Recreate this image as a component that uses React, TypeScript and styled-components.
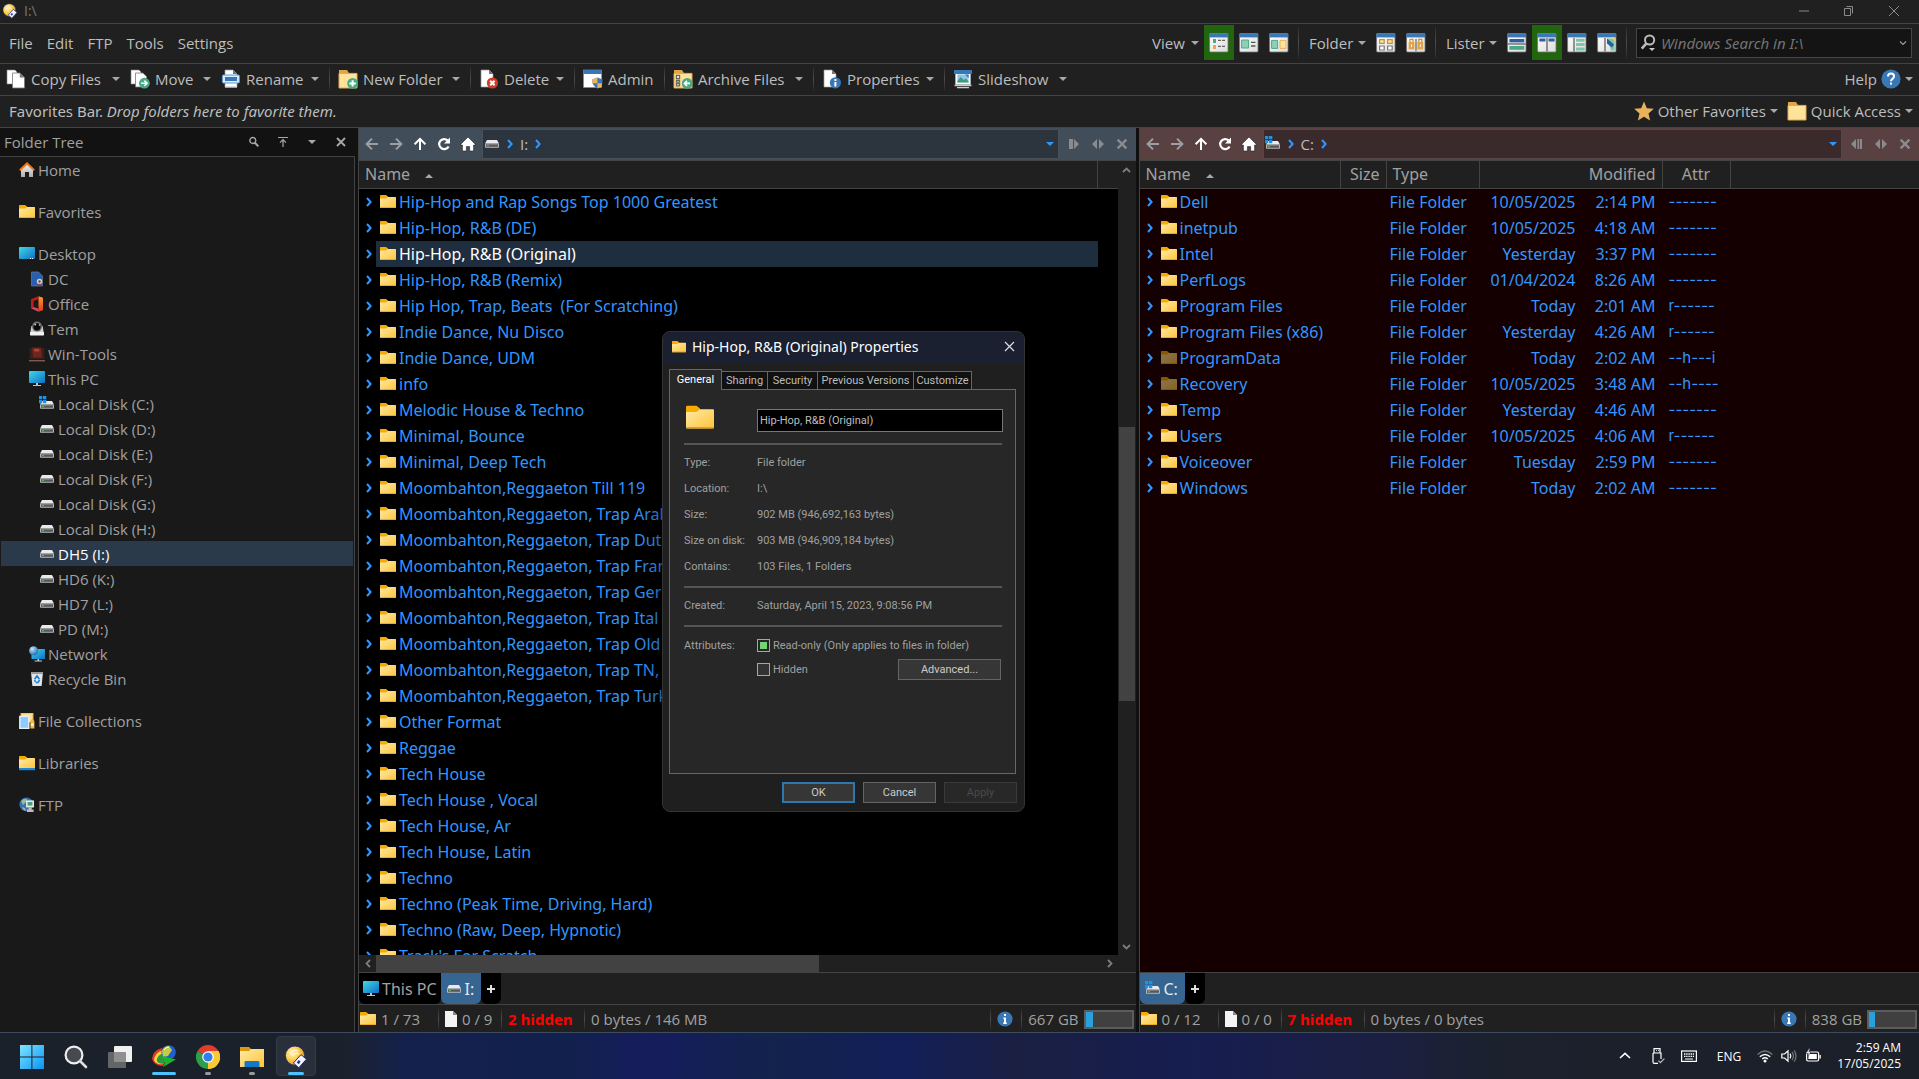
import React from "react";
import styled, { createGlobalStyle, css } from "styled-components";

const UI = `"Open Sans", "Noto Sans", sans-serif`;
const LIST_UI = `"Noto Sans", "Open Sans", sans-serif`;
const DIALOG_UI = `Roboto, "Liberation Sans", sans-serif`;
const c = {
  bar: "#202020",
  line: "#434343",
  text: "#bdbdbd",
  dim: "#a0a0a0",
  link: "#3296ff",
};

const Global = createGlobalStyle`
  * { box-sizing: border-box; }
  html, body, #root { height: 100%; }
  body { margin: 0; overflow: hidden; background: #000; }
  body, button, input { font-family: ${UI}; font-size: 15px; color: ${c.text}; }
  button { background: none; border: 0; padding: 0; margin: 0; cursor: default; white-space: nowrap; }
  svg { display: block; flex: none; }
  ul, dl, dd, h1, h2 { margin: 0; padding: 0; list-style: none; font-weight: 400; }
`;

/* ---------- icons ---------- */

const DefsSvg = styled.svg`
  position: absolute;
  width: 0;
  height: 0;
`;
const Defs = () => (
  <DefsSvg aria-hidden="true">
    <defs>
      <linearGradient id="gFolder" x1="0" y1="0" x2="1" y2="1">
        <stop offset="0" stopColor="#ffe9a6" /><stop offset="1" stopColor="#fec53a" />
      </linearGradient>
      <linearGradient id="gScreen" x1="0" y1="0" x2="1" y2="1">
        <stop offset="0" stopColor="#3fd8e8" /><stop offset="1" stopColor="#0f6fc6" />
      </linearGradient>
      <linearGradient id="gDrive" x1="0" y1="0" x2="0" y2="1">
        <stop offset="0" stopColor="#8a8a8a" /><stop offset="1" stopColor="#333" />
      </linearGradient>
      <linearGradient id="gHome" x1="0" y1="0" x2="0" y2="1">
        <stop offset="0" stopColor="#f4f4f4" /><stop offset="1" stopColor="#adadad" />
      </linearGradient>
      <linearGradient id="gWin" x1="0" y1="0" x2="1" y2="1">
        <stop offset="0" stopColor="#7fe6ff" /><stop offset="1" stopColor="#0a93f5" />
      </linearGradient>
      <linearGradient id="gView" x1="0" y1="0" x2="1" y2="1">
        <stop offset="0" stopColor="#fff" /><stop offset="1" stopColor="#dcdcdc" />
      </linearGradient>
      <radialGradient id="gBall" cx="0.35" cy="0.35" r="0.7">
        <stop offset="0" stopColor="#fff3c4" /><stop offset="0.5" stopColor="#ffcf52" /><stop offset="1" stopColor="#e79a12" />
      </radialGradient>
      <radialGradient id="gGlobe" cx="0.35" cy="0.3" r="0.75">
        <stop offset="0" stopColor="#bfe6fb" /><stop offset="1" stopColor="#1a68b0" />
      </radialGradient>
      <linearGradient id="gOffice" x1="0" y1="0" x2="0" y2="1">
        <stop offset="0" stopColor="#ff9a2e" /><stop offset="1" stopColor="#e13a10" />
      </linearGradient>
    </defs>
  </DefsSvg>
);

const Svg = ({ s = 16, w, h, vb, children }: { s?: number; w?: number; h?: number; vb?: string; children: React.ReactNode }) => (
  <svg width={w ?? s} height={h ?? s} viewBox={vb ?? `0 0 ${w ?? s} ${h ?? s}`} aria-hidden="true">{children}</svg>
);

const FolderArt = () => (
  <>
    <path d="M0 3.2V1.6Q0 1 .7 1H6l2 1.6V6H0z" fill="#f7ab00" />
    <path d="M0 4.6h6L8 3h7.4q.6 0 .6.6v9.8q0 .6-.6.6H.6q-.6 0-.6-.6z" fill="url(#gFolder)" />
    <path d="M0 13.2h16q0 .8-.6.8H.6q-.6 0-.6-.8z" fill="#e0a21e" />
  </>
);
const Folder = ({ s = 16 }: { s?: number }) => <Svg s={s} vb="0 0 16 16"><FolderArt /></Svg>;

const DriveArt = () => (
  <>
    <path d="M3 4h10l2 3.6H1z" fill="#e9e9ee" />
    <rect x="1" y="7.4" width="14" height="4.4" rx=".8" fill="#b9b9bd" />
    <rect x="2" y="8" width="12" height="2.6" fill="url(#gDrive)" />
    <rect x="3.4" y="9" width="1.2" height="1.2" fill="#4f4" />
  </>
);
const Drive = () => <Svg><DriveArt /></Svg>;
const WinDrive = () => (
  <Svg>
    <g transform="translate(0 1)"><DriveArt /></g>
    <path d="M0 0h3.3v3.2H0zM4 0h3.3v3.2H4zM0 4h3.3v3.2H0zM4 4h3.3v3.2H4z" fill="#1a94e6" />
  </Svg>
);
const Monitor = () => (
  <Svg>
    <rect width="16" height="12" rx=".8" fill="url(#gScreen)" />
    <path d="M7 12h2v2h3v1H4v-1h3z" fill="#b9c3cc" />
  </Svg>
);
const Desktop = () => (
  <Svg>
    <rect y="1" width="16" height="12" rx=".8" fill="url(#gScreen)" />
    <path d="M11 12h1v1h-1zM13 12h1v1h-1z" fill="#fff" />
  </Svg>
);
const HomeColor = () => (
  <Svg>
    <path d="M2 7l6-5.4L14 7v8H10v-5H6v5H2z" fill="url(#gHome)" />
    <path d="M.8 8.2L8 1.4l7.2 6.8" fill="none" stroke="#f07818" strokeWidth="2" />
  </Svg>
);
const Dc = () => (
  <Svg>
    <path d="M2.5 1h7l4 4v10h-11z" fill="#285fae" stroke="#5d7697" strokeWidth=".8" />
    <circle cx="10.5" cy="10.5" r="2" fill="none" stroke="#f0cf8a" strokeWidth="1.4" />
    <path d="M9 14l1.5-1.5L13 15H8.5z" fill="#d22" />
  </Svg>
);
const Office = () => (
  <Svg>
    <path d="M9.5.3L14 1.8v12.4l-4.5 1.5z" fill="url(#gOffice)" />
    <path d="M9.5.3L2 3.3v9l2.6-1.2V4.7l4.9-1.5z" fill="#c01c1c" />
    <path d="M2 12.3l2.6-1.2 4.9 1.7v2.9z" fill="#d8456d" />
  </Svg>
);
const Tem = () => (
  <Svg>
    <path d="M2.4 5h11.2l1.2 7H1.2z" fill="#cfcfd2" />
    <circle cx="8" cy="5.6" r="5" fill="#6d6f70" /><circle cx="8" cy="5.8" r="3.6" fill="#0a0a0a" />
    <circle cx="6.2" cy="3.4" r="1" fill="#b8d8b8" /><circle cx="10.6" cy="4" r=".8" fill="#ddd" />
    <rect x="1" y="11" width="14" height="3.4" rx=".6" fill="#f1f1f1" />
  </Svg>
);
const WinTools = () => (
  <Svg>
    <rect x=".5" y="2" width="15" height="11" fill="#33211d" />
    <path d="M3 1.5h9l1 10H4z" fill="#74231d" />
    <path d="M5 3h5l.4 2.6H5.4z" fill="#a8473a" />
    <path d="M0 14h16v1.4H0z" fill="#7d5a4e" />
  </Svg>
);
const Network = () => (
  <Svg>
    <rect x="2.5" y="3" width="13.5" height="10" rx=".6" fill="url(#gScreen)" />
    <path d="M8.5 13h1.6v1.6H13v1H5.5v-1h3z" fill="#c3ccd3" />
    <circle cx="4.6" cy="4.8" r="4.5" fill="url(#gGlobe)" />
  </Svg>
);
const Bin = () => (
  <Svg>
    <path d="M2 1h12l-1.4 14H3.4z" fill="#e4e4e4" />
    <path d="M2 1h12l-.2 2H2.2z" fill="#9a9a9a" />
    <path d="M5.6 8.2L8 4.8l2.4 3.4M10.6 9L9 11.4H6.8M5.6 9l1 2" fill="none" stroke="#1c7ed6" strokeWidth="1.5" />
  </Svg>
);
const Collections = () => (
  <Svg>
    <path d="M2 0h12v9H2z" fill="#ffe08a" stroke="#e3ae35" />
    <path d="M.8 3.4h9v12h-9z" fill="#8ecbff" stroke="#e8f1f8" strokeWidth="1.4" />
    <path d="M11.4 15.6V8l2-2.4 2 2.4v7.6z" fill="#f5b93a" /><circle cx="13.4" cy="11.6" r="1.6" fill="#dff1ff" />
  </Svg>
);
const Libraries = () => <Svg><FolderArt /><rect y="13" width="16" height="2.2" fill="#1c86d8" /></Svg>;
const Ftp = () => (
  <Svg>
    <circle cx="7.4" cy="7.4" r="7" fill="#3b6fae" />
    <path d="M2 4q3-3 6-2l-1 3-3 3zM3 10l3 1 1 3q-3-.6-4-4z" fill="#8ec0a0" />
    <rect x="7" y="3.4" width="8" height="7" fill="#e6e6e6" /><rect x="8.6" y="5" width="4.8" height="3.6" fill="#3fa37b" />
    <path d="M9.6 10.4h3v2h2V15H8v-2.6h1.6z" fill="#bdbdbd" />
  </Svg>
);

const page = (x: number) => (
  <path d={`M${x} 1h8l4 4v13h-12z`} fill="#fff" stroke="#9a9a9a" strokeWidth=".7" />
);
const fold = (x: number) => <path d={`M${x + 8} 1v4h4z`} fill="#777" />;
const CopyI = () => (
  <Svg s={20}>
    <path d="M1 1h8l2 2v12H1z" fill="#fff" stroke="#888" strokeWidth=".6" />
    <path d="M6.5 4h7.4l4.6 4.4V19h-12z" fill="#fff" stroke="#777" strokeWidth=".8" /><path d="M13.8 4v4.6h4.6z" fill="#777" />
  </Svg>
);
const MoveI = () => (
  <Svg s={20}>
    <path d="M1 1h8l2 2v12H1z" fill="#fff" stroke="#888" strokeWidth=".6" />
    <path d="M5.5 4h7.4l3.6 3.4V18h-11z" fill="#fff" stroke="#777" strokeWidth=".8" />
    <circle cx="14.4" cy="14.2" r="5.4" fill="#4aaa86" />
    <path d="M11.2 14.2h5.4M14.4 11.6l2.6 2.6-2.6 2.6" fill="none" stroke="#fff" strokeWidth="1.6" />
  </Svg>
);
const RenameI = () => (
  <Svg s={20}>
    {page(4)}{fold(4)}
    <path d="M4 17h12v1.6H4z" fill="#ddd" />
    <rect x="1.4" y="6" width="17" height="8" rx="1" fill="#d6ecff" stroke="#5f9ad0" /><rect x="4" y="8" width="12" height="4" fill="#3977b5" />
  </Svg>
);
const folder20 = (
  <>
    <path d="M1 1h8l1.6 2.4V6H1z" fill="#e0a548" />
    <path d="M1 4.4h18V19H1z" fill="#ffe39b" stroke="#e0a94e" />
  </>
);
const NewFolderI = () => (
  <Svg s={20}>{folder20}<circle cx="14.6" cy="14.4" r="5.4" fill="#4aaa86" /><path d="M14.6 11.2v6.4M11.4 14.4h6.4" stroke="#fff" strokeWidth="2" /></Svg>
);
const DeleteI = () => (
  <Svg s={20}>{page(2)}{fold(2)}<circle cx="13.4" cy="14" r="5.6" fill="#cc3f2c" /><path d="M11.2 11.8l4.4 4.4m0-4.4l-4.4 4.4" stroke="#fff" strokeWidth="2" /></Svg>
);
const AdminI = () => (
  <Svg s={20}>
    <rect x=".6" y="1" width="18" height="17.4" fill="#fff" stroke="#999" strokeWidth=".6" /><rect x=".4" y="1" width="18.4" height="4" fill="#3977b5" />
    <path d="M14.4 8.6l5.2 2q0 6.6-5.2 9-5.2-2.4-5.2-9z" fill="#3977b5" />
    <path d="M14.4 8.6v5.6H9.5q-.3-1.8-.3-3.6zM14.4 14.2h4.9q-1 3.8-4.9 5.4z" fill="#f0b355" />
  </Svg>
);
const ArchiveI = () => (
  <Svg s={20}>
    {folder20}
    <path d="M3.4 6.4h3.2v3.2H3.4zM3.4 11.4h3.2v1.8H3.4zM3.4 14.6h3.2v2.2H3.4z" fill="none" stroke="#666" strokeWidth="1.2" />
    <circle cx="14.2" cy="14.4" r="5.4" fill="#4aaa86" /><path d="M17 14.4h-5.4M14 11.8l-2.6 2.6 2.6 2.6" fill="none" stroke="#fff" strokeWidth="1.6" />
  </Svg>
);
const PropsI = () => (
  <Svg s={20}>{page(2)}{fold(2)}<circle cx="13.4" cy="13.8" r="5.6" fill="#3977b5" /><path d="M12.4 10h2v2h-2zM12.4 13h2v4.4h-2z" fill="#fff" /></Svg>
);
const SlideI = () => (
  <Svg s={20}>
    <rect x="1" y="1" width="18" height="4" fill="#3977b5" /><rect x="2.4" y="5" width="15.2" height="10.6" fill="#fff" />
    <rect x="4.4" y="5.4" width="11.2" height="8" fill="#8ec7ee" /><path d="M4.4 12l3.4-4 3 3 2-1.6 2.8 3v1H4.4z" fill="#3f9b78" /><path d="M12 5.4h3.6V9z" fill="#3977b5" />
    <path d="M1.6 15.6h16.8v1.6H1.6zM4 18h12v1.2H4z" fill="#ccc" />
  </Svg>
);
const Star = () => <Svg s={20}><path d="M10 .6l2.8 6.6 7 .6-5.3 4.7 1.6 7L10 15.8l-6.1 3.7 1.6-7L.2 7.8l7-.6z" fill="#e8b25c" /></Svg>;
const Quick = () => <Svg s={20}>{folder20}</Svg>;
const HelpI = () => (
  <Svg s={20}>
    <circle cx="10" cy="10" r="9.6" fill="#3977b5" />
    <path d="M7 7.6q0-3 3-3t3 2.7q0 1.5-1.5 2.6Q10 11 10 12.2" fill="none" stroke="#fff" strokeWidth="2" /><rect x="9" y="13.6" width="2" height="2" fill="#fff" />
  </Svg>
);

const ViewI = ({ children }: { children: React.ReactNode }) => (
  <Svg s={20}>
    <rect x=".6" y=".6" width="18.4" height="18.4" rx="1" fill="url(#gView)" stroke="#777" strokeWidth=".8" />
    <rect x=".4" y=".4" width="18.8" height="4" fill="#3977b5" />
    {children}
  </Svg>
);
const G = "#4aaa86";
const viewIcons: Record<string, React.ReactNode> = {
  details: <ViewI><path d="M4 6h3v4H4z" fill={G} /><path d="M4 12h3v4H4z" fill="#f0a34a" /><path d="M9 7.4h3m1 0h3M9 13.4h3m1 0h3" stroke="#666" strokeWidth="1.2" /></ViewI>,
  tiles: <ViewI><path d="M2.6 7h7v8h-7z" fill="#8fd0b5" stroke={G} /><path d="M12 9.4h4.4M12 13h4.4" stroke="#555" strokeWidth="1.4" /></ViewI>,
  thumbs: <ViewI><path d="M2.6 7.4h6v8h-6z" fill="#8fd0b5" stroke={G} /><path d="M11 7.4h6v8h-6z" fill="#ffe39b" stroke="#e8b25c" /></ViewI>,
  folders: <ViewI><path d="M3.6 6.6h4.6v3.8H3.6zM11.6 6.6h4.6v3.8h-4.6z" fill="#ffe39b" stroke="#c98f3a" strokeWidth="1.2" /><path d="M3.6 13h4.6v4H3.6zM11.6 13h4.6v4h-4.6z" fill="#fff" stroke="#777" strokeWidth="1.2" /></ViewI>,
  locks: <ViewI><path d="M2.6 9h5.8v7.4H2.6zM11.4 9h5.8v7.4h-5.8z" fill="#e0a548" /><path d="M4 9V6.4h3V9M12.8 9V6.4h3V9" fill="none" stroke="#c98f3a" strokeWidth="1.2" /><path d="M10 6v12" stroke="#666" strokeWidth="1.2" /><path d="M5 11.6h1v2.4H5zM13.8 11.6h1v2.4h-1z" fill="#fff" /></ViewI>,
  dualH: <ViewI><path d="M2.4 6h14.8v3.4H2.4z" fill="#2f5f9e" /><path d="M1 11h17.6" stroke="#555" strokeWidth="1.2" /><path d="M2.4 13h14.8v3.8H2.4z" fill={G} /></ViewI>,
  dualV: <ViewI><path d="M2.4 5.4h6v3h-6zM11.6 5.4h6v3h-6z" fill="#2f5f9e" /><path d="M10 5v13.6" stroke="#555" strokeWidth="1.2" /></ViewI>,
  tree: <ViewI><path d="M7 5v13.6" stroke="#555" strokeWidth="1.2" /><path d="M9 5.8h8.6v3H9zM9 10h8.6v3H9zM9 14.4h8.6v3H9z" fill="#7cc7a7" /></ViewI>,
  viewer: <ViewI><path d="M8 5v13.6" stroke="#555" strokeWidth="1.2" /><path d="M10 5.4h7.6v12H14z" fill="#7cc7a7" /><path d="M10 5.4l7 6-2 3-5-4z" fill="#2b5c9c" /><path d="M14 4.4h4v4z" fill="#f0c87a" /></ViewI>,
};

const Opus = ({ s }: { s: number }) => (
  <Svg s={s} vb="0 0 24 24">
    <circle cx="11" cy="10.6" r="9.6" fill="url(#gBall)" stroke="#17236a" strokeWidth=".8" />
    <path d="M6 9q3-5 8-3M8 11q3-4 7-2" stroke="#fff6da" strokeWidth="1.2" fill="none" />
    <path d="M17 9.6l5.4 4.6-7.6 8.6-5.4-4.8z" fill="#f3f3ff" stroke="#1b2a80" />
    <path d="M14.6 15l2 1.6-1.8 2.6-2-1.6z" fill="#2a34a8" />
  </Svg>
);

const stroke = (d: string, color = "currentColor", sw = 1.2, s = 16) => (
  <Svg s={s}><path d={d} fill="none" stroke={color} strokeWidth={sw} /></Svg>
);
const Nav = {
  back: stroke("M14 8H3M8 2.6L2.6 8 8 13.4", "#9b9ea2", 2),
  fwd: stroke("M2 8h11M8 2.6L13.4 8 8 13.4", "#9b9ea2", 2),
  up: stroke("M8 14V3M2.6 8.2L8 2.8l5.4 5.4", "#fff", 2),
  reload: (
    <Svg><path d="M12.6 10.4A5 5 0 1 1 11.6 4.4" fill="none" stroke="#fff" strokeWidth="2.2" /><path d="M14 1.4v6H8z" fill="#fff" /></Svg>
  ),
  home: <Svg><path d="M8 1L0 9h2.4v6h4v-4.4h3.2V15h4V9H16z" fill="#fff" stroke="#222" strokeWidth=".6" /></Svg>,
};
const Info = () => (
  <Svg><circle cx="8" cy="8" r="7.6" fill="#3977b5" /><path d="M7 3h2v2H7zM6.4 6.6H9v5h.8V13H6.2v-1.4H7V8h-.6z" fill="#fff" /></Svg>
);
const FileI = () => <Svg w={12} h={16}><path d="M0 0h8l4 4v12H0z" fill="#f4f4f4" /><path d="M8 0v4h4z" fill="#8a8a8a" /></Svg>;
const Plus = () => <Svg w={12} h={10}><path d="M6 1v8M2 5h8" stroke="#ddd" strokeWidth="2" /></Svg>;
const Search = ({ s = 16, color = "#bbb" }: { s?: number; color?: string }) => (
  <Svg s={s} vb="0 0 16 16"><circle cx="6.4" cy="6" r="4" fill="none" stroke={color} strokeWidth="1.8" /><path d="M9.2 9l4.6 4.8" stroke={color} strokeWidth="2.6" /></Svg>
);

/* ---------- shared parts ---------- */

const Caret = styled.span<{ $up?: boolean; $color?: string }>`
  flex: none;
  width: 0;
  height: 0;
  border: 4px solid transparent;
  ${(p) => (p.$up
    ? css`border-top-width: 0; border-bottom-color: ${p.$color ?? "#a8a8a8"};`
    : css`border-bottom-width: 0; border-top-color: ${p.$color ?? "#a8a8a8"};`)}
`;
const Sep = styled.span`
  flex: none;
  width: 1px;
  align-self: stretch;
  margin: 3px 0;
  background: linear-gradient(#2a2a2a, #4c4c4c, #2a2a2a);
`;
const Chev = ({ color = c.link }: { color?: string }) => (
  <Svg w={8} h={10}><path d="M2 1l3.6 4L2 9" fill="none" stroke={color} strokeWidth="2" /></Svg>
);
const Fill = styled.div`flex: 1;`;

/* ---------- frame ---------- */

const Page = styled.div`
  height: 100vh;
  display: flex;
  flex-direction: column;
  background: ${c.bar};
`;
const Bar = styled.header<{ $h: number }>`
  flex: none;
  display: flex;
  align-items: center;
  height: ${(p) => p.$h}px;
  padding-bottom: 2px;
  border-bottom: 1px solid ${c.line};
  white-space: nowrap;
`;
const TitleText = styled.h1`
  font-size: 14px;
  color: #777;
  padding-left: 6px;
`;
const TitleBar = styled(Bar)`padding-left: 2px; padding-right: 3px; color: #9a9a9a;`;
const WinButton = styled.button`
  width: 45px;
  height: 20px;
  display: grid;
  place-items: center;
  color: #8a8a8a;
`;
const MenuBar = styled(Bar)`padding-left: 9px; padding-right: 7px;`;
const MenuItem = styled.button`
  text-align: left;
  margin-right: 14px;
`;
const Cluster = styled.div<{ $w: number }>`
  display: flex;
  align-items: center;
  align-self: stretch;
  width: ${(p) => p.$w}px;
`;
const ClusterLabel = styled.button<{ $w: number }>`
  display: flex;
  align-items: center;
  justify-content: space-between;
  width: ${(p) => p.$w}px;
  margin: 0 5px 0 10px;
`;
const ViewButton = styled.button<{ $on?: boolean }>`
  width: 30px;
  height: 35px;
  display: grid;
  place-items: center;
  background: ${(p) => (p.$on ? "#22650f" : "none")};
`;
const SearchBox = styled.label`
  display: flex;
  align-items: center;
  gap: 4px;
  width: 276px;
  height: 30px;
  margin-left: 9px;
  padding: 0 4px;
  background: #141414;
  border: 1px solid #464646;
`;
const SearchInput = styled.input`
  flex: 1;
  min-width: 0;
  background: none;
  border: 0;
  padding: 0;
  outline: 0;
  font-family: ${LIST_UI};
  &::placeholder { color: #737373; font-style: italic; opacity: 1; }
`;
const ToolBar = styled(Bar)`padding-left: 6px; padding-right: 6px;`;
const ToolButton = styled.button<{ $w: number; $after?: boolean }>`
  display: flex;
  align-items: center;
  gap: 5px;
  width: ${(p) => p.$w}px;
  height: 28px;
  margin-left: ${(p) => (p.$after ? 8 : 0)}px;
`;
const ToolCaret = styled(Caret)`margin-left: auto; margin-right: 10px;`;
const EndButton = styled.button`
  display: flex;
  align-items: center;
  gap: 4px;
  margin-left: 9px;
`;
const FavText = styled.span`
  padding-left: 3px;
  font-family: ${LIST_UI};
`;

const Main = styled.main`
  flex: 1;
  min-height: 0;
  display: flex;
  border-bottom: 1px solid #3e4a5e;
`;

/* ---------- folder tree ---------- */

const Side = styled.aside`
  flex: none;
  width: 358px;
  display: flex;
  flex-direction: column;
  background: #121212;
`;
const SideHead = styled.div`
  display: flex;
  align-items: center;
  height: 28px;
  padding: 0 3px 0 4px;
  color: ${c.dim};
`;
const SideTitle = styled.h2`
  flex: 1;
  font-size: 15px;
`;
const SideButton = styled.button`
  width: 29px;
  display: grid;
  place-items: center;
  color: #a8a8a8;
`;
const Tree = styled.ul`
  flex: 1;
  width: 355px;
  background: #191919;
  border-top: 1px solid ${c.line};
  border-right: 1px solid ${c.line};
  padding: 0 1px;
`;
const TreeRow = styled.li<{ $level: number; $gap?: boolean; $on?: boolean }>`
  display: flex;
  align-items: center;
  gap: 3px;
  height: 25px;
  margin-top: ${(p) => (p.$gap ? 17 : 0)}px;
  padding-left: ${(p) => 18 + p.$level * 10}px;
  color: ${(p) => (p.$on ? "#fff" : c.dim)};
  background: ${(p) => (p.$on ? "#2a3a4b" : "none")};
`;
const tree: [string, number, React.ReactNode, boolean?][] = [
  ["Home", 0, <HomeColor />],
  ["Favorites", 0, <Folder />, true],
  ["Desktop", 0, <Desktop />, true],
  ["DC", 1, <Dc />],
  ["Office", 1, <Office />],
  ["Tem", 1, <Tem />],
  ["Win-Tools", 1, <WinTools />],
  ["This PC", 1, <Monitor />],
  ["Local Disk (C:)", 2, <WinDrive />],
  ["Local Disk (D:)", 2, <Drive />],
  ["Local Disk (E:)", 2, <Drive />],
  ["Local Disk (F:)", 2, <Drive />],
  ["Local Disk (G:)", 2, <Drive />],
  ["Local Disk (H:)", 2, <Drive />],
  ["DH5 (I:)", 2, <Drive />],
  ["HD6 (K:)", 2, <Drive />],
  ["HD7 (L:)", 2, <Drive />],
  ["PD (M:)", 2, <Drive />],
  ["Network", 1, <Network />],
  ["Recycle Bin", 1, <Bin />],
  ["File Collections", 0, <Collections />, true],
  ["Libraries", 0, <Libraries />, true],
  ["FTP", 0, <Ftp />, true],
];

/* ---------- file panes ---------- */

const Pane = styled.section<{ $basis: number }>`
  flex: 1 1 ${(p) => p.$basis}px;
  min-width: 0;
  display: flex;
  flex-direction: column;
  border-left: 1px solid ${c.line};
`;
const Divider = styled.div`
  flex: none;
  width: 3px;
  background: #101010;
`;
const AddressBar = styled.div<{ $bg: string }>`
  flex: none;
  display: flex;
  align-items: center;
  height: 33px;
  padding-left: 1px;
  background: ${(p) => p.$bg};
  border-bottom: 1px solid ${c.line};
`;
const NavButton = styled.button`
  width: 24px;
  height: 24px;
  display: grid;
  place-items: center;
`;
const Crumbs = styled.nav<{ $bg: string }>`
  flex: 1;
  display: flex;
  align-items: center;
  gap: 6px;
  height: 30px;
  margin-left: 2px;
  padding: 0 4px 0 1px;
  background: ${(p) => p.$bg};
  border: 1px solid #ffffff22;
`;
const PaneTools = styled.div`
  display: flex;
  padding: 0 2px 0 3px;
  ${NavButton} { color: #898b8f; }
`;
const Body = styled.div`
  flex: 1;
  min-height: 0;
  display: flex;
`;
const ListArea = styled.div<{ $bg: string }>`
  flex: 1;
  min-width: 0;
  overflow: hidden;
  background: ${(p) => p.$bg};
`;
const Table = styled.table`
  width: 100%;
  table-layout: fixed;
  border-collapse: separate;
  border-spacing: 0;
  font: 16px ${LIST_UI};
  color: ${c.link};
`;
const Th = styled.th<{ $align?: string }>`
  height: 28px;
  padding: 0 6px;
  font-weight: 400;
  color: ${c.dim};
  text-align: ${(p) => p.$align ?? "left"};
  background: ${c.bar};
  border-right: 1px solid ${c.line};
  border-bottom: 1px solid ${c.line};
  line-height: 27px;
  &:last-child { border-right: 0; }
`;
const SortCaret = styled(Caret)`
  display: inline-block;
  vertical-align: middle;
  margin-left: 15px;
`;
const Td = styled.td<{ $align?: string }>`
  height: 26px;
  padding: 0 7px 0 3px;
  line-height: 26px;
  white-space: pre;
  text-align: ${(p) => p.$align ?? "left"};
`;
const AttrTd = styled(Td)`
  padding: 0 2px 0 6px;
  font: 15px Inter, "Noto Sans", sans-serif;
  line-height: 26px;
`;
const NameCell = styled.div<{ $on?: boolean }>`
  display: flex;
  align-items: center;
  height: 26px;
  margin: 0 -7px 0 -3px;
  padding-left: 6px;
  color: ${(p) => (p.$on ? "#fff" : "inherit")};
  background: ${(p) => (p.$on ? "linear-gradient(to right, transparent 17px, #1f2e3f 17px)" : "none")};
`;
const FolderBox = styled.span<{ $faded?: boolean }>`
  margin: 0 3px 0 7px;
  opacity: ${(p) => (p.$faded ? 0.5 : 1)};
`;
const Name = ({ text, on, faded }: { text: string; on?: boolean; faded?: boolean }) => (
  <NameCell $on={on}><Chev /><FolderBox $faded={faded}><Folder /></FolderBox>{text}</NameCell>
);

const VScroll = styled.div`
  flex: none;
  width: 18px;
  display: flex;
  flex-direction: column;
  align-items: center;
  padding: 1px;
  background: ${c.bar};
`;
const HScroll = styled.div`
  flex: none;
  height: 17px;
  display: flex;
  align-items: center;
  padding: 0 18px 0 1px;
  background: ${c.bar};
`;
const ScrollButton = styled.button`
  width: 16px;
  height: 16px;
  display: grid;
  place-items: center;
`;
const Track = styled.div<{ $grow: number; $thumb?: boolean }>`
  flex: ${(p) => p.$grow} 1 0;
  align-self: stretch;
  background: ${(p) => (p.$thumb ? "#424242" : "none")};
`;
const Tabs = styled.div`
  flex: none;
  display: flex;
  height: 33px;
  border-top: 1px solid ${c.line};
  border-bottom: 1px solid ${c.line};
`;
const Tab = styled.button<{ $on?: boolean }>`
  display: flex;
  align-items: center;
  gap: 3px;
  padding: ${(p) => (p.$on ? "0 7px 0 5px" : "0 4px")};
  font: 16px ${LIST_UI};
  color: ${(p) => (p.$on ? "#e8e8e8" : c.dim)};
  background: ${(p) => (p.$on ? "#366591" : "#000")};
  border-radius: 0 0 6px 6px;
`;
const Status = styled.footer`
  flex: none;
  display: flex;
  align-items: center;
  height: 27px;
  padding-top: 1px;
  color: ${c.dim};
  white-space: nowrap;
`;
const StatusItem = styled.span<{ $w?: number }>`
  display: flex;
  align-items: center;
  gap: 5px;
  width: ${(p) => (p.$w ? `${p.$w}px` : "auto")};
  padding-left: 6px;
  &:first-child { padding-left: 1px; }
`;
const Hidden = styled.strong`color: #f00;`;
const Meter = styled.div`
  width: 50px;
  height: 19px;
  margin: 0 2px 0 5px;
  border: 2px solid #5c5c5c;
  background: #404040;
`;
const MeterFill = styled.div`
  height: 100%;
  background: #27a0dc;
`;

const songs = [
  "Hip-Hop and Rap Songs Top 1000 Greatest", "Hip-Hop, R&B (DE)", "Hip-Hop, R&B (Original)", "Hip-Hop, R&B (Remix)",
  "Hip Hop, Trap, Beats  (For Scratching)", "Indie Dance, Nu Disco", "Indie Dance, UDM", "info", "Melodic House & Techno",
  "Minimal, Bounce", "Minimal, Deep Tech", "Moombahton,Reggaeton Till 119", "Moombahton,Reggaeton, Trap Arab",
  "Moombahton,Reggaeton, Trap Dutch", "Moombahton,Reggaeton, Trap Fran", "Moombahton,Reggaeton, Trap Ger",
  "Moombahton,Reggaeton, Trap Ital", "Moombahton,Reggaeton, Trap Old", "Moombahton,Reggaeton, Trap TN,",
  "Moombahton,Reggaeton, Trap Turk", "Other Format", "Reggae", "Tech House", "Tech House , Vocal", "Tech House, Ar",
  "Tech House, Latin", "Techno", "Techno (Peak Time, Driving, Hard)", "Techno (Raw, Deep, Hypnotic)", "Track's For Scratch",
];
const system: [string, string, string, string, boolean?][] = [
  ["Dell", "10/05/2025", "2:14 PM", "-------"],
  ["inetpub", "10/05/2025", "4:18 AM", "-------"],
  ["Intel", "Yesterday", "3:37 PM", "-------"],
  ["PerfLogs", "01/04/2024", "8:26 AM", "-------"],
  ["Program Files", "Today", "2:01 AM", "r------"],
  ["Program Files (x86)", "Yesterday", "4:26 AM", "r------"],
  ["ProgramData", "Today", "2:02 AM", "--h---i", true],
  ["Recovery", "10/05/2025", "3:48 AM", "--h----", true],
  ["Temp", "Yesterday", "4:46 AM", "-------"],
  ["Users", "10/05/2025", "4:06 AM", "r------"],
  ["Voiceover", "Tuesday", "2:59 PM", "-------"],
  ["Windows", "Today", "2:02 AM", "-------"],
];

const Address = ({ bg, field, icon, label, mirrored }: { bg: string; field: string; icon: React.ReactNode; label: string; mirrored?: boolean }) => (
  <AddressBar $bg={bg}>
    <NavButton aria-label="Back">{Nav.back}</NavButton>
    <NavButton aria-label="Forward">{Nav.fwd}</NavButton>
    <NavButton aria-label="Up">{Nav.up}</NavButton>
    <NavButton aria-label="Refresh">{Nav.reload}</NavButton>
    <NavButton aria-label="Home">{Nav.home}</NavButton>
    <Crumbs $bg={field}>
      {icon}<Chev /><button>{label}</button><Chev />
      <Fill />
      <Caret $color={c.link} />
    </Crumbs>
    <PaneTools>
      <NavButton aria-label="Copy to other pane">
        {mirrored
          ? <Svg w={12} h={10}><path d="M5 0v10L0 5zM6.4 0h1.8v10H6.4zM9 0h2v10H9z" fill="currentColor" /></Svg>
          : <Svg w={12} h={10}><path d="M1 0h4v10H1zM6 0l5 5-5 5z" fill="currentColor" /></Svg>}
      </NavButton>
      <NavButton aria-label="Swap panes"><Svg w={12} h={10}><path d="M5 0v10L0 5zM7 0l5 5-5 5z" fill="currentColor" /></Svg></NavButton>
      <NavButton aria-label="Close pane"><Svg w={12} h={10}><path d="M1.6.6l8.8 8.8m0-8.8L1.6 9.4" stroke="currentColor" strokeWidth="2.4" /></Svg></NavButton>
    </PaneTools>
  </AddressBar>
);

const StatusLine = ({ folders, files, hidden, bytes, free, used, w }: { folders: string; files: string; hidden: string; bytes: string; free: string; used: number; w: number }) => (
  <Status>
    <StatusItem $w={w}><Folder />{folders}</StatusItem><Sep />
    <StatusItem $w={62}><FileI />{files}</StatusItem><Sep />
    <StatusItem $w={82}><Hidden>{hidden}</Hidden></StatusItem><Sep />
    <StatusItem>{bytes}</StatusItem>
    <Fill />
    <Sep /><StatusItem $w={30}><Info /></StatusItem><Sep />
    <StatusItem>{free}</StatusItem>
    <Meter role="meter" aria-valuenow={used} aria-valuemin={0} aria-valuemax={100} aria-label="Disk space used">
      <MeterFill style={{ width: `${used}%` }} />
    </Meter>
  </Status>
);

const LeftPane = () => (
  <Pane $basis={0}>
    <Address bg="#414d59" field="#2c343e" icon={<Drive />} label="I:" />
    <Body>
      <ListArea $bg="#000">
        <Table>
          <colgroup><col /><col width="20" /></colgroup>
          <thead><tr><Th>Name<SortCaret $up /></Th><Th /></tr></thead>
          <tbody>
            {songs.map((s) => (
              <tr key={s}><Td><Name text={s} on={s.includes("(Original)")} /></Td><Td /></tr>
            ))}
          </tbody>
        </Table>
      </ListArea>
      <VScroll>
        <ScrollButton aria-label="Scroll up">{stroke("M1 6l3.5-3.5L8 6", "#7d7d7d", 1.8, 9)}</ScrollButton>
        <Track $grow={248} /><Track $grow={274} $thumb /><Track $grow={236} />
        <ScrollButton aria-label="Scroll down">{stroke("M1 3l3.5 3.5L8 3", "#7d7d7d", 1.8, 9)}</ScrollButton>
      </VScroll>
    </Body>
    <HScroll>
      <ScrollButton aria-label="Scroll left">{stroke("M6 1L2.5 4.5 6 8", "#7d7d7d", 1.8, 9)}</ScrollButton>
      <Track $grow={443} $thumb /><Track $grow={283} />
      <ScrollButton aria-label="Scroll right">{stroke("M3 1l3.5 3.5L3 8", "#7d7d7d", 1.8, 9)}</ScrollButton>
    </HScroll>
    <Tabs>
      <Tab><Monitor />This PC</Tab>
      <Tab $on><Drive />I:</Tab>
      <Tab aria-label="New tab"><Plus /></Tab>
    </Tabs>
    <StatusLine folders="1 / 73" files="0 / 9" hidden="2 hidden" bytes="0 bytes / 146 MB" free="667 GB" used={17} w={79} />
  </Pane>
);

const RightPane = () => (
  <Pane $basis={4}>
    <Address bg="#594041" field="#3b2a2b" icon={<WinDrive />} label="C:" mirrored />
    <Body>
      <ListArea $bg="#140000">
        <Table>
          <colgroup><col width="201" /><col width="46" /><col width="93" /><col width="103" /><col width="80" /><col width="68" /><col /></colgroup>
          <thead>
            <tr>
              <Th>Name<SortCaret $up /></Th><Th $align="right">Size</Th><Th>Type</Th>
              <Th colSpan={2} $align="right">Modified</Th><Th $align="center">Attr</Th><Th />
            </tr>
          </thead>
          <tbody>
            {system.map(([n, d, t, a, faded]) => (
              <tr key={n}>
                <Td><Name text={n} faded={faded} /></Td><Td /><Td>File Folder</Td>
                <Td $align="right">{d}</Td><Td $align="right">{t}</Td><AttrTd>{a}</AttrTd><Td />
              </tr>
            ))}
          </tbody>
        </Table>
      </ListArea>
    </Body>
    <Tabs>
      <Tab $on><WinDrive />C:</Tab>
      <Tab aria-label="New tab"><Plus /></Tab>
    </Tabs>
    <StatusLine folders="0 / 12" files="0 / 0" hidden="7 hidden" bytes="0 bytes / 0 bytes" free="838 GB" used={14} w={78} />
  </Pane>
);

/* ---------- properties dialog ---------- */

const Dialog = styled.div`
  position: absolute;
  left: 662px;
  top: 331px;
  width: 363px;
  height: 481px;
  display: flex;
  flex-direction: column;
  background: #1f1f1f;
  border: 1px solid #333;
  border-radius: 8px;
  overflow: hidden;
  box-shadow: 0 12px 32px #000a;
`;
const DialogHead = styled.div`
  display: flex;
  align-items: center;
  gap: 6px;
  height: 31px;
  padding: 0 9px 2px 9px;
  background: #1b2030;
  color: #fff;
`;
const DialogTitle = styled.h2`
  flex: 1;
  font: 14px ${LIST_UI};
`;
const DialogTabs = styled.div`
  display: flex;
  align-items: flex-end;
  padding: 6px 6px 0;
`;
const DialogTab = styled.button<{ $on?: boolean; $w: number }>`
  position: relative;
  width: ${(p) => p.$w}px;
  height: 18px;
  font: 11px ${DIALOG_UI};
  color: ${c.text};
  background: #111;
  border: 1px solid #666;
  border-width: 1px 1px 0 0;
  ${(p) => p.$on && css`
    z-index: 1;
    height: 21px;
    margin-bottom: -1px;
    color: #fff;
    background: #272727;
    border-left-width: 1px;
    padding-bottom: 2px;
  `}
`;
const Sheet = styled.div`
  flex: 1;
  margin: 0 8px 0 6px;
  padding: 14px 13px 0 14px;
  background: #272727;
  border: 1px solid #666;
  font: 11px ${DIALOG_UI};
`;
const NameRow = styled.div`
  display: flex;
  align-items: flex-start;
  justify-content: space-between;
  margin: 0 -1px 11px 2px;
`;
const NameInput = styled.input`
  width: 246px;
  height: 23px;
  margin: 5px 0 0;
  padding: 0 2px;
  background: #000;
  border: 1px solid #777;
  color: ${c.text};
  font: 11px ${DIALOG_UI};
`;
const Rule = styled.hr`
  height: 2px;
  margin: 0;
  border: 0;
  background: #555;
`;
const Facts = styled.dl`
  display: grid;
  grid-template-columns: 73px 1fr;
  padding: 5px 0 6px;
  line-height: 26px;
  white-space: nowrap;
  color: ${c.dim};
`;
const Attributes = styled.div`
  display: grid;
  grid-template-columns: 73px 1fr;
  row-gap: 5px;
  padding-top: 10px;
  color: ${c.dim};
  line-height: 17px;
`;
const AttrRow = styled.div`
  display: flex;
  align-items: center;
  justify-content: space-between;
  grid-column: 2;
  padding-right: 1px;
`;
const Check = styled.label`
  display: flex;
  align-items: center;
  gap: 3px;
  white-space: nowrap;
`;
const Box = styled.input<{ $mixed?: boolean }>`
  appearance: none;
  width: 13px;
  height: 13px;
  margin: 0;
  border: 1px solid #a6a6a6;
  background: ${(p) => (p.$mixed ? "#72d572" : "#333")};
  box-shadow: ${(p) => (p.$mixed ? "inset 0 0 0 2px #272727" : "none")};
`;
const PushButton = styled.button<{ $w: number; $default?: boolean }>`
  width: ${(p) => p.$w}px;
  height: 21px;
  font: 11px ${DIALOG_UI};
  color: #ccc;
  background: #363636;
  border: 1px solid #646464;
  ${(p) => p.$default && css`border: 2px solid #2d79ae;`}
  &:disabled { color: #4a4a4a; background: #282828; border-color: #3a3a3a; }
`;
const DialogFoot = styled.div`
  display: flex;
  justify-content: flex-end;
  gap: 8px;
  padding: 8px 7px;
`;

const PropertiesDialog = () => (
  <Dialog role="dialog" aria-label="Hip-Hop, R&B (Original) Properties">
    <DialogHead>
      <Folder s={14} />
      <DialogTitle>Hip-Hop, R&amp;B (Original) Properties</DialogTitle>
      <button aria-label="Close">{stroke("M1 1l9 9M10 1l-9 9", "#ddd", 1.2, 11)}</button>
    </DialogHead>
    <DialogTabs>
      <DialogTab $on $w={53}>General</DialogTab>
      <DialogTab $w={46}>Sharing</DialogTab>
      <DialogTab $w={50}>Security</DialogTab>
      <DialogTab $w={96}>Previous Versions</DialogTab>
      <DialogTab $w={58}>Customize</DialogTab>
    </DialogTabs>
    <Sheet>
      <NameRow>
        <Folder s={28} />
        <NameInput aria-label="Folder name" defaultValue="Hip-Hop, R&B (Original)" />
      </NameRow>
      <Rule />
      <Facts>
        <dt>Type:</dt><dd>File folder</dd>
        <dt>Location:</dt><dd>I:\</dd>
        <dt>Size:</dt><dd>902 MB (946,692,163 bytes)</dd>
        <dt>Size on disk:</dt><dd>903 MB (946,909,184 bytes)</dd>
        <dt>Contains:</dt><dd>103 Files, 1 Folders</dd>
      </Facts>
      <Rule />
      <Facts><dt>Created:</dt><dd>Saturday, April 15, 2023, 9:08:56 PM</dd></Facts>
      <Rule />
      <Attributes>
        <span>Attributes:</span>
        <Check><Box type="checkbox" $mixed />Read-only (Only applies to files in folder)</Check>
        <AttrRow>
          <Check><Box type="checkbox" />Hidden</Check>
          <PushButton $w={103}>Advanced...</PushButton>
        </AttrRow>
      </Attributes>
    </Sheet>
    <DialogFoot>
      <PushButton $w={73} $default>OK</PushButton>
      <PushButton $w={73}>Cancel</PushButton>
      <PushButton $w={73} disabled>Apply</PushButton>
    </DialogFoot>
  </Dialog>
);

/* ---------- taskbar ---------- */

const TaskBar = styled.footer`
  flex: none;
  display: flex;
  align-items: center;
  height: 46px;
  padding: 0 18px 0 12px;
  background: linear-gradient(to right, #1b212b 0, #1b212c 18%, #14204c 21%, #12204f 30%, #151c5c 34%, #13234c 40%, #121e58 47%, #1a1f42 53%, #161d50 62%, #1b1f42 72%, #1b212d 78%, #1b1f28 100%);
  color: #fff;
`;
const TaskButton = styled.button<{ $open?: "active" | "wide" | "dot"; $lit?: boolean }>`
  display: grid;
  grid-template-rows: 1fr 3px;
  justify-items: center;
  align-items: center;
  width: 40px;
  height: 40px;
  margin-right: 4px;
  padding-top: 4px;
  border-radius: 4px;
  border: 1px solid ${(p) => (p.$lit ? "#343b46" : "transparent")};
  background: ${(p) => (p.$lit ? "#29303b" : "none")};
  &::after {
    content: "";
    height: 3px;
    border-radius: 2px;
    width: ${(p) => ({ active: 16, wide: 24, dot: 6, none: 0 })[p.$open ?? "none"]}px;
    background: ${(p) => (p.$open === "dot" ? "#9a9a9a" : "#4cc2ff")};
  }
`;
const TrayButton = styled.button<{ $w: number }>`
  display: grid;
  place-items: center;
  width: ${(p) => p.$w}px;
  height: 40px;
  font-size: 12px;
  color: #fff;
`;
const Clock = styled.button`
  width: 76px;
  font-size: 12px;
  line-height: 16px;
  text-align: right;
  color: #fff;
`;

const Taskbar = () => (
  <TaskBar>
    <TaskButton aria-label="Start"><Svg s={24}><path d="M0 0h11.4v11.4H0zM12.4 0H24v11.4H12.4zM0 12.4h11.4V24H0zM12.4 12.4H24V24H12.4z" fill="url(#gWin)" /></Svg></TaskButton>
    <TaskButton aria-label="Search"><Svg s={24}><circle cx="10" cy="10" r="8.4" fill="#ffffff30" stroke="#eee" strokeWidth="2.2" /><path d="M16 16l6 6" stroke="#ddd" strokeWidth="2.6" strokeLinecap="round" /></Svg></TaskButton>
    <TaskButton aria-label="Task view"><Svg s={24}><rect x="6" y="1" width="18" height="16" rx="1" fill="#f0f0f0" /><rect y="7" width="18" height="16" rx="1" fill="#777c" /></Svg></TaskButton>
    <TaskButton $open="wide" aria-label="Download manager">
      <Svg s={24}>
        <path d="M0 14Q1 5 10 3l5 8-4 10Q2 21 0 14z" fill="#e8352a" /><path d="M2 15Q3 8 10 5.6l5 6-4 7.4Q4 20 2 15z" fill="#ffd83a" /><path d="M4.6 15q1-5 6-6.4l4 4-3 6q-6 1-7-3.6z" fill="#2d9a3c" />
        <circle cx="16.6" cy="7.4" r="7.2" fill="#1f5fd0" /><path d="M10 6q2-5 7-5l3 4-4 6-5 1z" fill="#c2cc4a" /><path d="M12 5q2-3 5-3" stroke="#fff" fill="none" />
        <path d="M10 11l14 3.4-13 7.6 2-5z" fill="#19b52a" />
      </Svg>
    </TaskButton>
    <TaskButton $open="dot" aria-label="Chrome">
      <Svg s={24}>
        <path d="M12 12L1.6 6A12 12 0 0 1 22.4 6z" fill="#e33b2e" /><path d="M12 12L22.4 6A12 12 0 0 1 12 24z" fill="#fcc934" /><path d="M12 12v12A12 12 0 0 1 1.6 6z" fill="#2c9f4b" />
        <path d="M12 6h10.4a12 12 0 0 1-10.4 18l5.2-9z" fill="#fcc934" />
        <circle cx="12" cy="12" r="5.8" fill="#fff" /><circle cx="12" cy="12" r="4.6" fill="#2f7ff0" />
      </Svg>
    </TaskButton>
    <TaskButton $open="dot" aria-label="File Explorer">
      <Svg s={24}><path d="M0 2h9l2 2v4H0z" fill="#d99a12" /><path d="M0 6h9l2-2h13v18H0z" fill="url(#gFolder)" /><path d="M4.5 22v-4.6q0-1.4 1.4-1.4h12.2q1.4 0 1.4 1.4V22z" fill="#1478c8" /></Svg>
    </TaskButton>
    <TaskButton $open="active" $lit aria-label="Directory Opus"><Opus s={24} /></TaskButton>
    <Fill />
    <TrayButton $w={32} aria-label="Show hidden icons">{stroke("M3 10l5-4.6L13 10", "#fff", 1.6)}</TrayButton>
    <TrayButton $w={32} aria-label="Eject device">
      <Svg><path d="M5 5V.6h6V5M4 5h8v6M4 5v9q0 1.4 1.4 1.4H9" fill="none" stroke="#fff" strokeWidth="1.2" /><path d="M7 2.6h.8M9 2.6h.8" stroke="#fff" /><path d="M9.4 12.6l2 2 4-4" fill="none" stroke="#bbb" strokeWidth="1.3" /></Svg>
    </TrayButton>
    <TrayButton $w={32} aria-label="Touch keyboard">
      <Svg><rect x=".6" y="3" width="14.8" height="10.4" fill="none" stroke="#fff" strokeWidth="1.2" /><path d="M3 6h10M3 8.4h10" stroke="#fff" strokeWidth="1.4" strokeDasharray="1.4 .8" /><path d="M4 11h8" stroke="#fff" /></Svg>
    </TrayButton>
    <TrayButton $w={48}>ENG</TrayButton>
    <TrayButton $w={24} aria-label="Wi-Fi">
      <Svg><path d="M.6 6.4Q8-.4 15.4 6.4" fill="none" stroke="#777" strokeWidth="1.4" /><path d="M2.8 8.8q5.2-4.6 10.4 0M5.2 11q2.8-2.4 5.6 0" fill="none" stroke="#fff" strokeWidth="1.5" /><circle cx="8" cy="13" r="1.5" fill="#fff" /></Svg>
    </TrayButton>
    <TrayButton $w={24} aria-label="Volume">
      <Svg><path d="M.8 6h2.8L7 2.8v10.4L3.6 10H.8z" fill="none" stroke="#fff" strokeWidth="1.2" /><path d="M9 5.6q1.6 2.4 0 4.8" fill="none" stroke="#fff" strokeWidth="1.2" /><path d="M11 3.8q3 4.2 0 8.4M13.2 2.4q3.6 5.6 0 11.2" fill="none" stroke="#777" strokeWidth="1.2" /></Svg>
    </TrayButton>
    <TrayButton $w={24} aria-label="Battery">
      <Svg><rect x="1.6" y="4" width="12" height="9" rx="1.4" fill="none" stroke="#fff" strokeWidth="1.2" /><rect x="3.4" y="6" width="8.4" height="5" fill="#fff" /><path d="M14.4 7h1.4v3.4h-1.4z" fill="#fff" /><path d="M4 .6L1 5.6h2.4L2.6 9 6 4H3.8L5 .6z" fill="#fff" stroke="#1b212d" strokeWidth=".5" /></Svg>
    </TrayButton>
    <Clock>2:59 AM<br />17/05/2025</Clock>
  </TaskBar>
);

/* ---------- app ---------- */

const tools: { label: string; icon: React.ReactNode; w: number; caret?: boolean; sep?: boolean }[] = [
  { label: "Copy Files", icon: <CopyI />, w: 124, caret: true },
  { label: "Move", icon: <MoveI />, w: 91, caret: true },
  { label: "Rename", icon: <RenameI />, w: 108, caret: true },
  { label: "New Folder", icon: <NewFolderI />, w: 132, caret: true, sep: true },
  { label: "Delete", icon: <DeleteI />, w: 95, caret: true, sep: true },
  { label: "Admin", icon: <AdminI />, w: 81, sep: true },
  { label: "Archive Files", icon: <ArchiveI />, w: 140, caret: true, sep: true },
  { label: "Properties", icon: <PropsI />, w: 122, caret: true, sep: true },
  { label: "Slideshow", icon: <SlideI />, w: 124, caret: true, sep: true },
];

export default function App() {
  return (
    <Page>
      <Global />
      <Defs />
      <TitleBar $h={24}>
        <Opus s={16} />
        <TitleText>I:\</TitleText>
        <Fill />
        <WinButton aria-label="Minimize">{stroke("M1 6h10", "currentColor", 1, 12)}</WinButton>
        <WinButton aria-label="Restore">{stroke("M1.5 3.5h6v7h-6zM3.5 1.5h6v7", "currentColor", 1, 12)}</WinButton>
        <WinButton aria-label="Close">{stroke("M1 1l10 10M11 1L1 11", "currentColor", 1, 12)}</WinButton>
      </TitleBar>
      <MenuBar $h={40}>
        {["File", "Edit", "FTP", "Tools", "Settings"].map((m) => <MenuItem key={m}>{m}</MenuItem>)}
        <Fill />
        <Cluster $w={156}>
          <ClusterLabel $w={47}>View<Caret /></ClusterLabel>
          <ViewButton $on aria-label="Details">{viewIcons.details}</ViewButton>
          <ViewButton aria-label="Tiles">{viewIcons.tiles}</ViewButton>
          <ViewButton aria-label="Thumbnails">{viewIcons.thumbs}</ViewButton>
        </Cluster>
        <Sep />
        <Cluster $w={136}>
          <ClusterLabel $w={57}>Folder<Caret /></ClusterLabel>
          <ViewButton aria-label="Folder options">{viewIcons.folders}</ViewButton>
          <ViewButton aria-label="Format lock">{viewIcons.locks}</ViewButton>
        </Cluster>
        <Sep />
        <Cluster $w={190}>
          <ClusterLabel $w={51}>Lister<Caret /></ClusterLabel>
          <ViewButton aria-label="Dual horizontal">{viewIcons.dualH}</ViewButton>
          <ViewButton $on aria-label="Dual vertical">{viewIcons.dualV}</ViewButton>
          <ViewButton aria-label="Tree">{viewIcons.tree}</ViewButton>
          <ViewButton aria-label="Viewer">{viewIcons.viewer}</ViewButton>
        </Cluster>
        <Sep />
        <SearchBox>
          <Svg w={16} h={18}><circle cx="8.6" cy="6" r="4.6" fill="none" stroke="#bbb" strokeWidth="2" /><path d="M5.4 9.4L.8 14.6" stroke="#bbb" strokeWidth="2.6" /><path d="M8 14h6l-3 3z" fill="#ccc" /></Svg>
          <SearchInput type="text" aria-label="Windows Search" placeholder="Windows Search in I:\" />
          {stroke("M1 2.5l3 3 3-3", "#999", 1.2, 8)}
        </SearchBox>
      </MenuBar>
      <ToolBar $h={32}>
        {tools.map(({ label, icon, w, caret, sep }) => (
          <React.Fragment key={label}>
            {sep && <Sep />}
            <ToolButton $w={w} $after={sep}>{icon}{label}{caret && <ToolCaret />}</ToolButton>
          </React.Fragment>
        ))}
        <Fill />
        <EndButton>Help<HelpI /><Caret /></EndButton>
      </ToolBar>
      <ToolBar $h={32}>
        <FavText>Favorites Bar. <em>Drop folders here to favorite them.</em></FavText>
        <Fill />
        <EndButton><Star />Other Favorites<Caret /></EndButton>
        <EndButton><Quick />Quick Access<Caret /></EndButton>
      </ToolBar>
      <Main>
        <Side>
          <SideHead>
            <SideTitle>Folder Tree</SideTitle>
            <SideButton aria-label="Find"><Search s={12} color="#a8a8a8" /></SideButton>
            <SideButton aria-label="Collapse">{stroke("M1 1.5h10M6 11V4M3 6.6L6 3.6l3 3", "#a8a8a8", 1.2, 12)}</SideButton>
            <SideButton aria-label="Menu"><Caret /></SideButton>
            <SideButton aria-label="Close tree">{stroke("M1 1l8 8M9 1L1 9", "#a8a8a8", 1.8, 10)}</SideButton>
          </SideHead>
          <Tree>
            {tree.map(([t, level, icon, gap]) => (
              <TreeRow key={t} $level={level} $gap={gap} $on={t === "DH5 (I:)"}>{icon}{t}</TreeRow>
            ))}
          </Tree>
        </Side>
        <LeftPane />
        <Divider />
        <RightPane />
      </Main>
      <Taskbar />
      <PropertiesDialog />
    </Page>
  );
}
